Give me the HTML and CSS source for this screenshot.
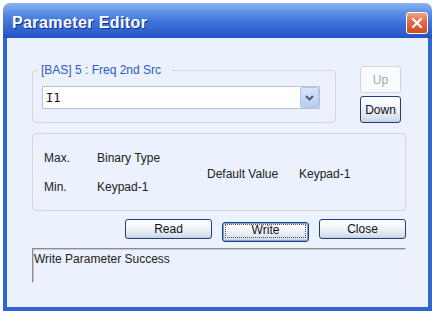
FILE: index.html
```html
<!DOCTYPE html>
<html lang="en">
<head>
    <meta charset="UTF-8">
    <title>Parameter Editor</title>
<link rel="stylesheet" href="styles.css">
</head>
<body>
    <div class="window">
        <div class="titlebar">
            <span class="title">Parameter Editor</span>
            <button class="close-btn">
                <svg width="12" height="12" viewBox="0 0 12 12">
                    <path d="M2 2 L10 10 M10 2 L2 10" stroke="#fff" stroke-width="2.2" stroke-linecap="round"/>
                </svg>
            </button>
        </div>
        <div class="body">
            <div class="top-row">
                <fieldset class="src">
                    <legend>[BAS] 5 : Freq 2nd Src</legend>
                    <div class="combo">
                        <span class="combo-value">I1</span>
                        <span class="combo-arrow">
                            <svg width="9" height="6" viewBox="0 0 9 6">
                                <polyline points="1,1 4.5,4.5 8,1" fill="none" stroke="#4a5c80" stroke-width="2"/>
                            </svg>
                        </span>
                    </div>
                </fieldset>
                <div class="updown">
                    <button class="btn small" disabled>Up</button>
                    <button class="btn small">Down</button>
                </div>
            </div>
            <div class="info">
                <div class="range">
                    <span>Max.</span><span>Binary Type</span>
                    <span>Min.</span><span>Keypad-1</span>
                </div>
                <div class="default">
                    <span class="default-label">Default Value</span>
                    <span>Keypad-1</span>
                </div>
            </div>
            <div class="actions">
                <button class="btn">Read</button>
                <button class="btn default"><span class="focus">Write</span></button>
                <button class="btn">Close</button>
            </div>
            <div class="status">Write Parameter Success</div>
        </div>
    </div>
</body>
</html>
```

FILE: styles.css
```css
*{
    margin: 0;
    padding: 0;
    box-sizing: border-box;
}
body{
    background: #fff;
    font-family: "Liberation Sans", Arial, sans-serif;
    font-size: 12px;
    color: #222;
}
.window{
    width: 429px;
    height: 308px;
    margin: 3px;
    display: flex;
    flex-direction: column;
}
.titlebar{
    height: 35px;
    flex-shrink: 0;
    border-radius: 7px 7px 0 0;
    background: linear-gradient(#8ab4f2 0%, #5f93e7 25%, #3f73da 55%, #2e5fcc 85%, #2452c0 100%);
    display: flex;
    align-items: center;
    justify-content: space-between;
    padding: 4px 4px 0 9px;
}
.title{
    color: #fff;
    font-weight: bold;
    font-size: 16px;
    letter-spacing: 0.4px;
    text-shadow: 1px 1px 0 #123088;
}
.close-btn{
    width: 22px;
    height: 22px;
    border: 1px solid #fff;
    border-radius: 3px;
    background: linear-gradient(#eea587, #e26a42 45%, #cf4b1f);
    display: flex;
    align-items: center;
    justify-content: center;
}
.body{
    flex: 1;
    background: #ebf1fd;
    border: 4px solid #3165d0;
    border-top: 0;
    padding: 25px 22px 0 25px;
}
.top-row{
    display: flex;
    align-items: flex-start;
}
.src{
    width: 304px;
    height: 60px;
    border: 1px solid #d3d7d0;
    border-radius: 4px;
    padding: 9px 0 0 9px;
}
.src legend{
    color: #2d5bc4;
    line-height: 14px;
    padding: 0 11px 0 3px;
    margin-left: -4px;
}
.combo{
    width: 278px;
    height: 23px;
    background: #fff;
    border: 1px solid #b4c3d9;
    display: flex;
    align-items: center;
}
.combo-value{
    flex: 1;
    padding-left: 3px;
    font-family: "DejaVu Sans Mono", monospace;
    font-size: 12px;
    color: #111;
}
.combo-arrow{
    width: 19px;
    height: 21px;
    background: linear-gradient(#d9e4fb, #b9ccf2);
    border: 1px solid #b3c6ec;
    border-radius: 2px;
    display: flex;
    align-items: center;
    justify-content: center;
}
.updown{
    margin-left: 24px;
    margin-top: 3px;
    display: flex;
    flex-direction: column;
    gap: 3px;
}
.btn{
    font-family: "Liberation Sans", Arial, sans-serif;
    font-size: 12px;
    color: #111;
    border: 1px solid #1f3f78;
    border-radius: 3px;
    background: linear-gradient(#ffffff, #f3f5fa 40%, #d9e1ee 85%, #c4cfe3);
}
.btn.small{
    width: 41px;
    height: 27px;
}
.btn:disabled{
    background: #fafbfe;
    border-color: #cfd5de;
    color: #a6a6a6;
}
.info{
    margin-top: 10px;
    height: 78px;
    border: 1px solid #d3d7d0;
    border-radius: 4px;
    display: flex;
    align-items: center;
    padding-left: 11px;
}
.range{
    display: grid;
    grid-template-columns: 53px 110px;
    row-gap: 15px;
    line-height: 14px;
}
.default{
    display: flex;
    margin-top: 3px;
    line-height: 14px;
}
.default-label{
    width: 92px;
}
.actions{
    display: flex;
    justify-content: flex-end;
    gap: 10px;
    margin-top: 8px;
}
.actions .btn{
    width: 87px;
    height: 20px;
}
.btn.default{
    padding: 1px 2px 3px;
    box-shadow: inset 0 0 0 1px #7aa0e6;
}
.focus{
    display: block;
    width: 100%;
    height: 14px;
    border: 1px dotted #555;
    line-height: 11px;
    text-align: center;
}
.status{
    margin-top: 6px;
    height: 35px;
    border: 1px solid;
    border-color: #8e8e8e #f2f4f8 #f2f4f8 #8e8e8e;
    box-shadow: inset 1px 1px 0 #c9c9c9;
    padding: 3px 0 0 1px;
    line-height: 14px;
}
```
